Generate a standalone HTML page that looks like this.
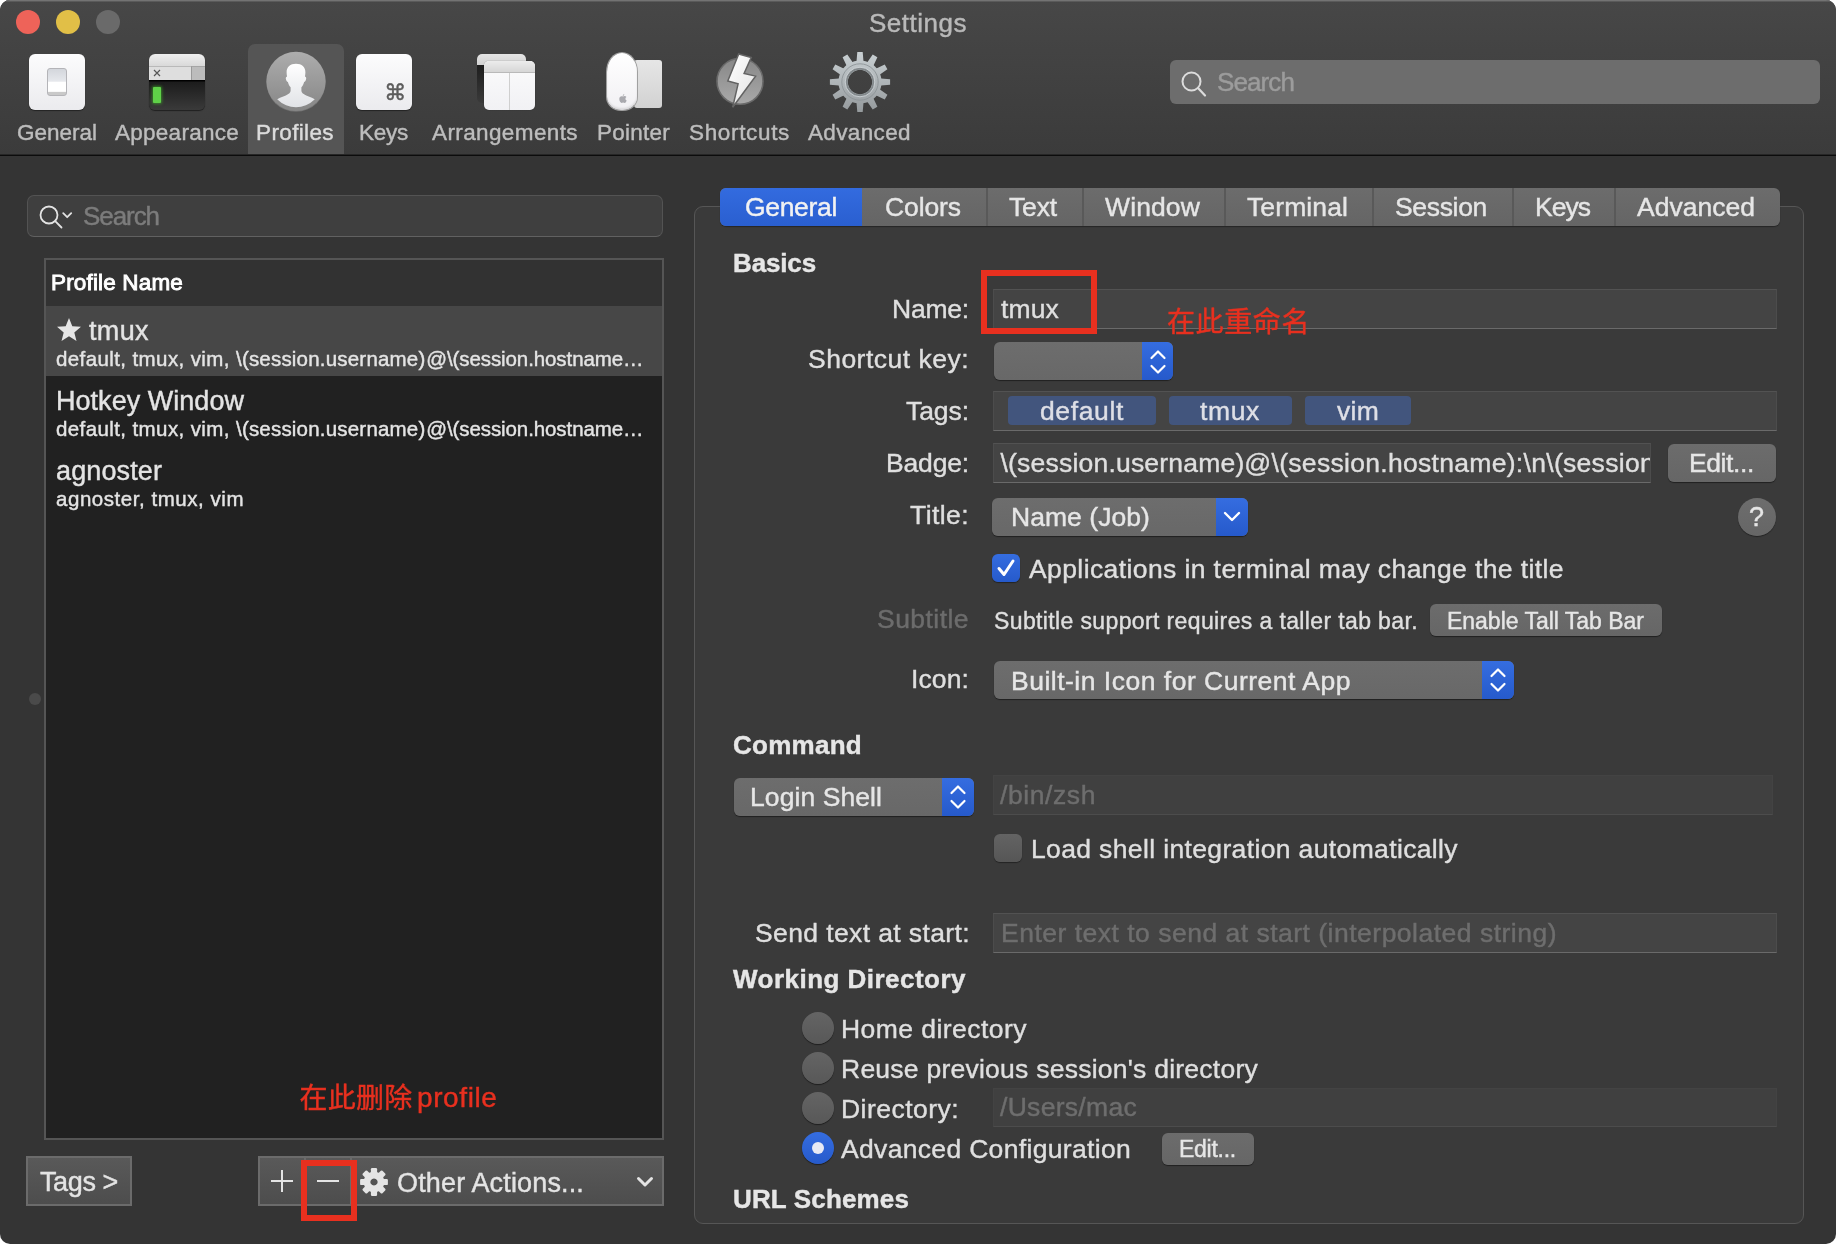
<!DOCTYPE html>
<html lang="en"><head><meta charset="utf-8"><title>Settings</title>
<style>
html,body{margin:0;padding:0;background:#fff}
body{width:1836px;height:1244px;overflow:hidden;position:relative;font-family:"Liberation Sans","Noto Sans CJK SC",sans-serif}
.abs{position:absolute}
#win{position:absolute;left:0;top:0;width:1836px;height:1244px;border-radius:10px;background:#343434;overflow:hidden;will-change:transform}
#tb{position:absolute;left:0;top:0;width:1836px;height:154px;background:linear-gradient(#474747,#3b3b3b);box-shadow:inset 0 1px 0 #737373,inset 0 2px 0 #5a5a5a}
.dot{width:24px;height:24px;border-radius:12px}
.sep{top:0;width:2px;height:38px;background:#595959}
.fld{background:#444;box-sizing:border-box;border:1px solid #4c4c4c;border-top-color:#525252;border-bottom-color:#6a6a6a}
.fld.dis{background:#404040;border-color:#434343;border-bottom-color:#4c4c4c}
.pop{border-radius:6px;background:linear-gradient(#6d6d6d,#686868);box-shadow:0 1px 1px rgba(0,0,0,.45);overflow:hidden}
.pop .cap{position:absolute;right:0;top:0;height:100%;background:linear-gradient(#356de0,#265acb)}
.btn{border-radius:6px;background:linear-gradient(#6c6c6c,#666);box-shadow:0 1px 1px rgba(0,0,0,.45)}
.btn2{background:linear-gradient(#595959,#4d4d4d);border:2px solid #6b6b6b;box-sizing:border-box}
.tag{height:29px;border-radius:4px;background:#42557d}
.rad{width:32px;height:32px;border-radius:16px;background:linear-gradient(#646464,#585858);box-shadow:0 1px 1px rgba(0,0,0,.5)}
.rad.on{background:linear-gradient(#356de0,#265acb)}
.t{position:absolute;white-space:pre;line-height:40px;height:40px;-webkit-text-stroke:0.42px}
.clip{position:absolute;overflow:hidden;height:40px}
</style></head>
<body>
<!-- window chrome -->
<div id="win">
<div id="tb"></div>
<div class="abs" style="left:0;top:154px;width:1836px;height:2px;background:linear-gradient(#262626 0,#262626 50%,#0c0c0c 50%,#0c0c0c 100%)"></div>
<!-- traffic lights -->
<div class="abs dot" style="left:16px;top:10px;background:#ee6359"></div>
<div class="abs dot" style="left:56px;top:10px;background:#e1bf47"></div>
<div class="abs dot" style="left:96px;top:10px;background:#6a6a6a"></div>
<!-- selected toolbar item -->
<div class="abs" style="left:248px;top:44px;width:96px;height:110px;background:#555;border-radius:7px 7px 0 0"></div>

<!-- ICONS -->
<!-- General -->
<div class="abs" style="left:29px;top:54px;width:56px;height:56px;border-radius:6px;background:linear-gradient(#fcfcfd,#ebebee);box-shadow:0 1px 1px rgba(0,0,0,.45)"></div>
<div class="abs" style="left:47px;top:68px;width:20px;height:28px;border-radius:3px;border:1px solid #b4b4b8;background:linear-gradient(#d3d6dc 0%,#e6e8ec 47%,#ffffff 51%,#ffffff 86%,#c9c9c9 90%,#c9c9c9 100%);box-sizing:border-box"></div>
<!-- Appearance -->
<div class="abs" style="left:149px;top:54px;width:56px;height:56px;border-radius:6px;overflow:hidden;background:#2a2a2a;box-shadow:0 1px 1px rgba(0,0,0,.5)">
  <div class="abs" style="left:0;top:0;width:56px;height:12px;background:linear-gradient(#efefef,#d9d9d9)"></div>
  <div class="abs" style="left:0;top:12px;width:42px;height:14px;background:#dedede;border-top:1px solid #b9b9b9;box-sizing:border-box"></div>
  <div class="abs" style="left:42px;top:12px;width:14px;height:14px;background:#bcbcbc;border-top:1px solid #a5a5a5;border-left:1px solid #999;box-sizing:border-box"></div>
  <div class="abs" style="left:0;top:26px;width:56px;height:30px;background:linear-gradient(#000 0,#000 1px,#1c1c1c 2px,#3a3a3a 100%)"></div>
  <div class="abs" style="left:4px;top:33px;width:8px;height:16px;background:#5fd048;border-radius:1px;box-shadow:0 0 3px 1px rgba(70,200,40,.55)"></div>
  <svg class="abs" style="left:4px;top:15px" width="8" height="8" viewBox="0 0 8 8"><path d="M1 1L7 7M7 1L1 7" stroke="#555" stroke-width="1.2" fill="none"/></svg>
</div>
<!-- Profiles -->
<svg class="abs" style="left:264px;top:50px" width="64" height="64" viewBox="264 50 64 64">
  <defs>
    <linearGradient id="pg" x1="0" y1="0" x2="0" y2="1"><stop offset="0" stop-color="#adadad"/><stop offset="1" stop-color="#868686"/></linearGradient>
    <linearGradient id="ph" x1="0" y1="0" x2="0" y2="1"><stop offset="0" stop-color="#ffffff"/><stop offset="1" stop-color="#dfe1e5"/></linearGradient>
    <clipPath id="pc"><circle cx="296" cy="81.400" r="25.800"/></clipPath>
  </defs>
  <circle cx="296" cy="82.200" r="29.600" fill="#737373"/>
  <circle cx="296" cy="81.400" r="29.600" fill="url(#pg)"/>
  <g clip-path="url(#pc)"><path fill="url(#ph)" d="M296 63.800c5.800 0 9.400 3.200 9.400 8.400 0 1.700-.2 3.100-.5 4.500 1.200-.1 1.600 1.300 1.100 2.900-.4 1.400-1.100 2.300-1.900 2.300-.5 2.200-1.500 4.100-2.700 5.400v3.500c0 1.800 1.500 3.200 4.800 4.600 4.800 2 11.200 3.800 12.800 8.600v6h-46v-6c1.600-4.800 8-6.600 12.800-8.600 3.300-1.400 4.800-2.800 4.800-4.600v-3.500c-1.200-1.300-2.200-3.200-2.700-5.400-.8 0-1.500-.9-1.900-2.300-.5-1.600-.1-3 1.100-2.900-.3-1.400-.5-2.800-.5-4.500 0-5.200 3.600-8.400 9.400-8.400z"/></g>
</svg>
<!-- Keys -->
<div class="abs" style="left:356px;top:54px;width:56px;height:56px;border-radius:6px;background:linear-gradient(#fcfcfd,#ebebee);box-shadow:0 1px 1px rgba(0,0,0,.45)"></div>
<!-- Arrangements -->
<div class="abs" style="left:477px;top:54px;width:49px;height:49px;border-radius:5px;background:linear-gradient(#161616,#3a3a3a);overflow:hidden"><div style="height:11px;background:linear-gradient(#e6e6e6,#d2d2d2)"></div></div>
<div class="abs" style="left:484px;top:61px;width:51px;height:49px;border-radius:5px;background:linear-gradient(#fbfbfc,#f1f1f4);overflow:hidden;box-shadow:0 0 1px rgba(0,0,0,.6)"><div style="height:11px;background:linear-gradient(#ececec,#d6d6d6);border-bottom:1px solid #b9b9b9"></div><div class="abs" style="left:25px;top:12px;width:1px;height:38px;background:#cfcfcf"></div></div>
<!-- Pointer -->
<div class="abs" style="left:634px;top:60px;width:28px;height:48px;border-radius:3px;background:linear-gradient(#e6e6e6,#d2d2d2)"></div>
<div class="abs" style="left:607px;top:53px;width:30px;height:57px;border-radius:15px 15px 14px 14px / 19px 19px 13px 13px;background:linear-gradient(#ffffff,#f1f0f3);box-shadow:0 0 0 1px #a0a0a0, inset 0 -2px 2px rgba(0,0,0,.10)"></div>
<svg class="abs" style="left:619px;top:94px" width="8" height="9" viewBox="0 0 8 9"><path d="M5.300 0c.1.800-.6 1.800-1.500 1.900C3.700 1.100 4.500.2 5.300 0zM4 2.400c.5 0 1-.4 1.700-.4.600 0 1.300.3 1.700.9-1.500.9-1.200 3 .3 3.600C7.300 7.600 6.500 9 5.600 9c-.6 0-.8-.4-1.500-.4S3.200 9 2.600 9C1.600 9 .3 7 .3 5.100.3 3.300 1.400 2.300 2.500 2.300c.7 0 1.100.1 1.500.1z" fill="#a9a9ae"/></svg>
<!-- Shortcuts -->
<svg class="abs" style="left:710px;top:50px" width="60" height="62" viewBox="710 50 60 62">
  <defs><linearGradient id="sg" x1="0" y1="0" x2="0" y2="1"><stop offset="0" stop-color="#878787"/><stop offset="1" stop-color="#a9a9a9"/></linearGradient>
  <linearGradient id="bg" x1="0" y1="0" x2="1" y2="1"><stop offset="0" stop-color="#ffffff"/><stop offset="1" stop-color="#e2e2e2"/></linearGradient></defs>
  <circle cx="740" cy="81.300" r="23" fill="url(#sg)" stroke="#6a6a6a" stroke-width="1.600"/>
  <path d="M738.700 54L751.200 57.600L744.100 73.400L755.600 76.100L732.700 107.200L738.100 83.800L727.800 81z" fill="url(#bg)" stroke="#636363" stroke-width="1.500" stroke-linejoin="miter"/>
</svg>
<!-- Advanced gear -->
<svg class="abs" style="left:828px;top:50px" width="64" height="64" viewBox="-32 -32 64 64">
  <defs><linearGradient id="gg" gradientUnits="userSpaceOnUse" x1="0" y1="-30" x2="0" y2="30"><stop offset="0" stop-color="#c9d0d3"/><stop offset="1" stop-color="#959a9d"/></linearGradient></defs>
  <g fill="url(#gg)"><path d="M-2.70 -30.10L2.70 -30.10L3.70 -18.00L-3.70 -18.00zM12.71 -27.42L17.39 -24.72L12.20 -13.74L5.80 -17.44zM24.72 -17.39L27.42 -12.71L17.44 -5.80L13.74 -12.20zM30.10 -2.70L30.10 2.70L18.00 3.70L18.00 -3.70zM27.42 12.71L24.72 17.39L13.74 12.20L17.44 5.80zM17.39 24.72L12.71 27.42L5.80 17.44L12.20 13.74zM2.70 30.10L-2.70 30.10L-3.70 18.00L3.70 18.00zM-12.71 27.42L-17.39 24.72L-12.20 13.74L-5.80 17.44zM-24.72 17.39L-27.42 12.71L-17.44 5.80L-13.74 12.20zM-30.10 2.70L-30.10 -2.70L-18.00 -3.70L-18.00 3.70zM-27.42 -12.71L-24.72 -17.39L-13.74 -12.20L-17.44 -5.80zM-17.39 -24.72L-12.71 -27.42L-5.80 -17.44L-12.20 -13.74z"/>
    <path fill-rule="evenodd" d="M0-21.600a21.600 21.600 0 1 0 .01 0zM0-12.200a12.200 12.200 0 1 1-.01 0z"/>
  </g>
  <circle r="18.200" fill="none" stroke="#8d9497" stroke-width="0.900"/>
  <circle r="13.400" fill="none" stroke="#83898c" stroke-width="2.200"/>
  <circle r="14.800" fill="none" stroke="#cdd3d6" stroke-width="0.900"/>
</svg>

<!-- toolbar search -->
<div class="abs" style="left:1170px;top:60px;width:650px;height:44px;border-radius:6px;background:#6d6d6d"></div>
<svg class="abs" style="left:1180px;top:70px" width="28" height="28" viewBox="0 0 28 28"><circle cx="11.500" cy="11.500" r="9" fill="none" stroke="#dcdcdc" stroke-width="2"/><path d="M18 18l7 7.500" stroke="#dcdcdc" stroke-width="2.200" stroke-linecap="round"/></svg>

<!-- LEFT PANEL -->
<div class="abs" style="left:27px;top:195px;width:636px;height:42px;border-radius:7px;background:#3f3f3f;border:1px solid #535353;border-bottom-color:#616161;box-sizing:border-box"></div>
<svg class="abs" style="left:38px;top:204px" width="38" height="28" viewBox="0 0 38 28"><circle cx="11" cy="11" r="8.500" fill="none" stroke="#e2e2e2" stroke-width="1.800"/><path d="M17.200 17.200l6.300 6.300" stroke="#e2e2e2" stroke-width="1.800" stroke-linecap="round"/><path d="M25.200 9.200l4 4 4-4" stroke="#e2e2e2" stroke-width="1.800" fill="none" stroke-linecap="round" stroke-linejoin="round"/></svg>

<div class="abs" style="left:44px;top:258px;width:620px;height:882px;background:#212121;border:2px solid #555;box-sizing:border-box"></div>
<div class="abs" style="left:46px;top:260px;width:616px;height:46px;background:#323232"></div>
<div class="abs" style="left:46px;top:306px;width:616px;height:70px;background:#474747"></div>
<svg class="abs" style="left:56px;top:317px" width="26" height="25" viewBox="0 0 26 25"><path d="M13 1l3.300 8.200 8.700.6-6.700 5.600 2.200 8.500L13 19.200 5.500 23.900l2.200-8.500L1 9.800l8.700-.6z" fill="#e6e6e6"/></svg>
<div class="abs" style="left:29px;top:693px;width:12px;height:12px;border-radius:6px;background:#4a4a4a"></div>

<!-- bottom buttons -->
<div class="abs btn2" style="left:26px;top:1156px;width:106px;height:50px"></div>
<div class="abs btn2" style="left:258px;top:1156px;width:406px;height:50px"></div>
<div class="abs" style="left:304px;top:1158px;width:2px;height:47px;background:#6b6b6b"></div>
<div class="abs" style="left:350px;top:1158px;width:2px;height:47px;background:#6b6b6b"></div>
<svg class="abs" style="left:268px;top:1167px" width="28" height="28" viewBox="0 0 28 28"><path d="M14 3v22M3 14h22" stroke="#e4e4e4" stroke-width="2"/></svg>
<svg class="abs" style="left:314px;top:1167px" width="28" height="28" viewBox="0 0 28 28"><path d="M3 14h22" stroke="#e4e4e4" stroke-width="2"/></svg>
<svg class="abs" style="left:360px;top:1168px" width="28" height="28" viewBox="-14 -14 28 28">
  <g fill="#e4e4e4">
    <rect x="-3.100" y="-13.900" width="6.200" height="8" rx="1.200"/>
    <rect x="-3.100" y="-13.900" width="6.200" height="8" rx="1.200" transform="rotate(45)"/>
    <rect x="-3.100" y="-13.900" width="6.200" height="8" rx="1.200" transform="rotate(90)"/>
    <rect x="-3.100" y="-13.900" width="6.200" height="8" rx="1.200" transform="rotate(135)"/>
    <rect x="-3.100" y="-13.900" width="6.200" height="8" rx="1.200" transform="rotate(180)"/>
    <rect x="-3.100" y="-13.900" width="6.200" height="8" rx="1.200" transform="rotate(225)"/>
    <rect x="-3.100" y="-13.900" width="6.200" height="8" rx="1.200" transform="rotate(270)"/>
    <rect x="-3.100" y="-13.900" width="6.200" height="8" rx="1.200" transform="rotate(315)"/>
    <path fill-rule="evenodd" d="M0-10.300a10.300 10.300 0 1 0 .01 0zM0-3.600a3.600 3.600 0 1 1-.01 0z"/>
  </g>
</svg>
<svg class="abs" style="left:636px;top:1176px" width="18" height="12" viewBox="0 0 18 12"><path d="M2.500 2.500l6.500 6.500 6.500-6.500" stroke="#e4e4e4" stroke-width="3" fill="none" stroke-linecap="round" stroke-linejoin="round"/></svg>
<div class="abs" style="left:301px;top:1160px;width:56px;height:61px;border:6px solid #e8301f;box-sizing:border-box"></div>

<!-- RIGHT PANEL -->
<div class="abs" style="left:694px;top:206px;width:1110px;height:1018px;border-radius:9px;background:#3a3a3a;border:1px solid #565656;box-sizing:border-box"></div>
<!-- tabs -->
<div class="abs" style="left:720px;top:188px;width:1060px;height:38px;border-radius:6px;background:linear-gradient(#6c6c6c,#656565);box-shadow:0 1px 1px rgba(0,0,0,.35);overflow:hidden">
  <div class="abs" style="left:0;top:0;width:142px;height:38px;background:linear-gradient(#336bdf,#2a5fd0)"></div>
  <div class="abs sep" style="left:266px"></div>
  <div class="abs sep" style="left:362px"></div>
  <div class="abs sep" style="left:504px"></div>
  <div class="abs sep" style="left:652px"></div>
  <div class="abs sep" style="left:792px"></div>
  <div class="abs sep" style="left:894px"></div>
</div>

<!-- fields -->
<div class="abs fld" style="left:993px;top:289px;width:784px;height:40px"></div>
<div class="abs" style="left:981px;top:270px;width:116px;height:64px;border:6px solid #e8301f;box-sizing:border-box"></div>

<div class="abs pop" style="left:994px;top:342px;width:179px;height:38px"><div class="cap" style="width:31px"></div></div>
<svg class="abs" style="left:1149px;top:347px" width="18" height="30" viewBox="0 0 18 30"><path d="M2.500 11l6.500-6.500 6.500 6.500M2.500 19l6.500 6.500 6.500-6.500" stroke="#fff" stroke-width="2.200" fill="none" stroke-linecap="round" stroke-linejoin="round"/></svg>

<div class="abs fld" style="left:993px;top:391px;width:784px;height:40px"></div>
<div class="abs tag" style="left:1008px;top:396px;width:148px"></div>
<div class="abs tag" style="left:1169px;top:396px;width:123px"></div>
<div class="abs tag" style="left:1305px;top:396px;width:106px"></div>

<div class="abs fld" style="left:993px;top:443px;width:658px;height:40px"></div>
<div class="abs btn" style="left:1668px;top:444px;width:108px;height:38px"></div>

<div class="abs pop" style="left:992px;top:498px;width:256px;height:38px"><div class="cap" style="width:32px"></div></div>
<svg class="abs" style="left:1223px;top:510px" width="18" height="14" viewBox="0 0 18 14"><path d="M2 3l7 7 7-7" stroke="#fff" stroke-width="2.400" fill="none" stroke-linecap="round" stroke-linejoin="round"/></svg>
<div class="abs" style="left:1738px;top:498px;width:38px;height:38px;border-radius:19px;background:linear-gradient(#6d6d6d,#666);box-shadow:0 1px 1px rgba(0,0,0,.4)"></div>

<div class="abs" style="left:992px;top:554px;width:28px;height:28px;border-radius:6px;background:linear-gradient(#356de0,#265acb);box-shadow:0 1px 1px rgba(0,0,0,.4)"></div>
<svg class="abs" style="left:992px;top:554px" width="28" height="28" viewBox="0 0 28 28"><path d="M7 14.500l5 6 9-13.500" stroke="#fff" stroke-width="3" fill="none" stroke-linecap="round" stroke-linejoin="round"/></svg>

<div class="abs btn" style="left:1430px;top:604px;width:232px;height:32px"></div>

<div class="abs pop" style="left:994px;top:661px;width:520px;height:38px"><div class="cap" style="width:32px"></div></div>
<svg class="abs" style="left:1489px;top:665px" width="18" height="30" viewBox="0 0 18 30"><path d="M2.500 11l6.500-6.500 6.500 6.500M2.500 19l6.500 6.500 6.500-6.500" stroke="#fff" stroke-width="2.200" fill="none" stroke-linecap="round" stroke-linejoin="round"/></svg>

<div class="abs pop" style="left:734px;top:778px;width:240px;height:38px"><div class="cap" style="width:32px"></div></div>
<svg class="abs" style="left:949px;top:782px" width="18" height="30" viewBox="0 0 18 30"><path d="M2.500 11l6.500-6.500 6.500 6.500M2.500 19l6.500 6.500 6.500-6.500" stroke="#fff" stroke-width="2.200" fill="none" stroke-linecap="round" stroke-linejoin="round"/></svg>
<div class="abs fld dis" style="left:993px;top:775px;width:780px;height:40px"></div>

<div class="abs" style="left:994px;top:834px;width:28px;height:28px;border-radius:6px;background:linear-gradient(#636363,#565656);box-shadow:0 1px 1px rgba(0,0,0,.4)"></div>

<div class="abs fld" style="left:993px;top:913px;width:784px;height:40px"></div>

<div class="abs rad" style="left:802px;top:1012px"></div>
<div class="abs rad" style="left:802px;top:1052px"></div>
<div class="abs rad" style="left:802px;top:1092px"></div>
<div class="abs rad on" style="left:802px;top:1132px"></div>
<div class="abs" style="left:812px;top:1142px;width:12px;height:12px;border-radius:6px;background:#e8eaf4"></div>
<div class="abs fld dis" style="left:993px;top:1088px;width:784px;height:39px"></div>
<div class="abs btn" style="left:1162px;top:1133px;width:92px;height:32px"></div>

<span class="t" style="left:869px;top:3px;font-size:26px;color:#b9b9b9;letter-spacing:0.506px;">Settings</span>
<span class="t" style="left:17px;top:113px;font-size:22.5px;color:#bdbdbd;letter-spacing:-0.007px;">General</span>
<span class="t" style="left:115px;top:113px;font-size:22.5px;color:#bdbdbd;letter-spacing:0.264px;">Appearance</span>
<span class="t" style="left:256px;top:113px;font-size:22.5px;color:#dcdcdc;letter-spacing:0.371px;">Profiles</span>
<span class="t" style="left:359px;top:113px;font-size:22.5px;color:#bdbdbd;letter-spacing:-0.258px;">Keys</span>
<span class="t" style="left:432px;top:113px;font-size:22.5px;color:#bdbdbd;letter-spacing:0.389px;">Arrangements</span>
<span class="t" style="left:597px;top:113px;font-size:22.5px;color:#bdbdbd;letter-spacing:0.243px;">Pointer</span>
<span class="t" style="left:689px;top:113px;font-size:22.5px;color:#bdbdbd;letter-spacing:0.661px;">Shortcuts</span>
<span class="t" style="left:808px;top:113px;font-size:22.5px;color:#bdbdbd;letter-spacing:0.365px;">Advanced</span>
<span class="t" style="left:384.2px;top:73px;font-size:22px;color:#5c5c5c;font-family:'DejaVu Sans',sans-serif;-webkit-text-stroke:0.45px;">⌘</span>
<span class="t" style="left:1217px;top:62px;font-size:26px;color:#9c9c9c;letter-spacing:-0.898px;">Search</span>
<span class="t" style="left:83px;top:196px;font-size:26px;color:#7c7c7c;letter-spacing:-1.065px;">Search</span>
<span class="t" style="left:51px;top:263px;font-size:22.5px;color:#ffffff;-webkit-text-stroke:0.9px;letter-spacing:0.163px;">Profile Name</span>
<span class="t" style="left:89px;top:311px;font-size:27px;color:#e4e4e4;letter-spacing:0.371px;">tmux</span>
<span class="t" style="left:56px;top:339px;font-size:20.5px;color:#e4e4e4;letter-spacing:0.398px;">default, tmux, vim, </span>
<span class="t" style="left:236px;top:339px;font-size:20.5px;color:#e4e4e4;letter-spacing:0.199px;">\(session.username)</span>
<span class="t" style="left:426.2px;top:339px;font-size:20.5px;color:#e4e4e4;letter-spacing:-0.089px;">@\(session.hostname…</span>
<span class="t" style="left:56px;top:381px;font-size:27px;color:#e4e4e4;letter-spacing:0.032px;">Hotkey Window</span>
<span class="t" style="left:56px;top:409px;font-size:20.5px;color:#e4e4e4;letter-spacing:0.398px;">default, tmux, vim, </span>
<span class="t" style="left:236px;top:409px;font-size:20.5px;color:#e4e4e4;letter-spacing:0.199px;">\(session.username)</span>
<span class="t" style="left:426.2px;top:409px;font-size:20.5px;color:#e4e4e4;letter-spacing:-0.089px;">@\(session.hostname…</span>
<span class="t" style="left:56px;top:451px;font-size:27px;color:#e4e4e4;letter-spacing:0.115px;">agnoster</span>
<span class="t" style="left:56px;top:479px;font-size:20.5px;color:#e4e4e4;letter-spacing:0.540px;">agnoster, tmux, vim</span>
<span class="t" style="left:299.5px;top:1079px;font-size:28px;color:#e8301f;letter-spacing:0.246px;">在此删除</span>
<span class="t" style="left:417px;top:1078px;font-size:28px;color:#e8301f;letter-spacing:0.605px;">profile</span>
<span class="t" style="left:40px;top:1162px;font-size:27px;color:#e4e4e4;letter-spacing:-0.385px;">Tags &gt;</span>
<span class="t" style="left:397px;top:1163px;font-size:27px;color:#e4e4e4;letter-spacing:0.150px;">Other Actions...</span>
<span class="t" style="left:745px;top:187px;font-size:26.5px;color:#f2f2f2;letter-spacing:-0.326px;">General</span>
<span class="t" style="left:885px;top:187px;font-size:26.5px;color:#e6e6e6;letter-spacing:-0.096px;">Colors</span>
<span class="t" style="left:1009px;top:187px;font-size:26.5px;color:#e6e6e6;letter-spacing:-0.152px;">Text</span>
<span class="t" style="left:1105px;top:187px;font-size:26.5px;color:#e6e6e6;letter-spacing:0.122px;">Window</span>
<span class="t" style="left:1247px;top:187px;font-size:26.5px;color:#e6e6e6;letter-spacing:0.107px;">Terminal</span>
<span class="t" style="left:1395px;top:187px;font-size:26.5px;color:#e6e6e6;letter-spacing:-0.326px;">Session</span>
<span class="t" style="left:1535px;top:187px;font-size:26.5px;color:#e6e6e6;letter-spacing:-0.980px;">Keys</span>
<span class="t" style="left:1637px;top:187px;font-size:26.5px;color:#e6e6e6;letter-spacing:0.016px;">Advanced</span>
<span class="t" style="left:733px;top:243px;font-size:26px;color:#e6e6e6;font-weight:700;letter-spacing:-0.141px;">Basics</span>
<span class="t" style="left:733px;top:725px;font-size:26px;color:#e6e6e6;font-weight:700;letter-spacing:0.268px;">Command</span>
<span class="t" style="left:733px;top:959px;font-size:26px;color:#e6e6e6;font-weight:700;letter-spacing:0.476px;">Working Directory</span>
<span class="t" style="left:733px;top:1179px;font-size:26px;color:#e6e6e6;font-weight:700;letter-spacing:0.148px;">URL Schemes</span>
<span class="t" style="left:892px;top:289px;font-size:26.5px;color:#dfdfdf;letter-spacing:-0.212px;">Name:</span>
<span class="t" style="left:808px;top:339px;font-size:26.5px;color:#dfdfdf;letter-spacing:0.488px;">Shortcut key:</span>
<span class="t" style="left:906px;top:391px;font-size:26.5px;color:#dfdfdf;letter-spacing:-0.069px;">Tags:</span>
<span class="t" style="left:886px;top:443px;font-size:26.5px;color:#dfdfdf;letter-spacing:-0.167px;">Badge:</span>
<span class="t" style="left:910px;top:495px;font-size:26.5px;color:#dfdfdf;letter-spacing:0.424px;">Title:</span>
<span class="t" style="left:877px;top:599px;font-size:26.5px;color:#6c6c6c;letter-spacing:0.451px;">Subtitle</span>
<span class="t" style="left:911px;top:659px;font-size:26.5px;color:#dfdfdf;letter-spacing:0.109px;">Icon:</span>
<span class="t" style="left:755px;top:913px;font-size:26.5px;color:#dfdfdf;letter-spacing:0.384px;">Send text at start:</span>
<span class="t" style="left:1001px;top:289px;font-size:26.5px;color:#dfdfdf;letter-spacing:0.141px;">tmux</span>
<span class="t" style="left:1167px;top:303px;font-size:28px;color:#e8301f;letter-spacing:0.597px;">在此重命名</span>
<span class="t" style="left:1040px;top:391px;font-size:26.5px;color:#dedfe6;letter-spacing:0.632px;">default</span>
<span class="t" style="left:1200px;top:391px;font-size:26.5px;color:#dedfe6;letter-spacing:0.641px;">tmux</span>
<span class="t" style="left:1337px;top:391px;font-size:26.5px;color:#dedfe6;letter-spacing:0.260px;">vim</span>
<span class="t" style="left:1000.5px;top:443px;font-size:26.5px;color:#dfdfdf;letter-spacing:0.206px;">\(session.username)</span>
<div class="clip" style="left:1244.3px;top:443px;width:405.7px;"><span class="t" style="left:0;top:0;font-size:26.5px;color:#dfdfdf;letter-spacing:0.303px;">@\(session.hostname):\n\(session</span></div>
<span class="t" style="left:1689px;top:443px;font-size:26.5px;color:#e6e6e6;letter-spacing:-0.395px;">Edit...</span>
<span class="t" style="left:1011px;top:497px;font-size:26.5px;color:#e6e6e6;letter-spacing:0.056px;">Name (Job)</span>
<span class="t" style="left:1749px;top:497px;font-size:27px;color:#e6e6e6;letter-spacing:0.969px;">?</span>
<span class="t" style="left:1029px;top:549px;font-size:26.5px;color:#dfdfdf;letter-spacing:0.399px;">Applications in terminal may change the title</span>
<span class="t" style="left:994px;top:601px;font-size:23px;color:#dfdfdf;letter-spacing:0.375px;">Subtitle support requires a taller tab bar.</span>
<span class="t" style="left:1447px;top:601px;font-size:23px;color:#e6e6e6;letter-spacing:-0.018px;">Enable Tall Tab Bar</span>
<span class="t" style="left:1011px;top:661px;font-size:26.5px;color:#e6e6e6;letter-spacing:0.499px;">Built-in Icon for Current App</span>
<span class="t" style="left:750px;top:777px;font-size:26.5px;color:#e6e6e6;letter-spacing:0.078px;">Login Shell</span>
<span class="t" style="left:1000px;top:775px;font-size:26.5px;color:#6e6e6e;letter-spacing:0.584px;">/bin/zsh</span>
<span class="t" style="left:1031px;top:829px;font-size:26.5px;color:#dfdfdf;letter-spacing:0.362px;">Load shell integration automatically</span>
<span class="t" style="left:1001px;top:913px;font-size:26.5px;color:#6e6e6e;letter-spacing:0.495px;">Enter text to send at start (interpolated string)</span>
<span class="t" style="left:841px;top:1009px;font-size:26.5px;color:#dfdfdf;letter-spacing:0.452px;">Home directory</span>
<span class="t" style="left:841px;top:1049px;font-size:26.5px;color:#dfdfdf;letter-spacing:0.246px;">Reuse previous session's directory</span>
<span class="t" style="left:841px;top:1089px;font-size:26.5px;color:#dfdfdf;letter-spacing:0.461px;">Directory:</span>
<span class="t" style="left:1000px;top:1087px;font-size:26.5px;color:#6e6e6e;letter-spacing:0.300px;">/Users/mac</span>
<span class="t" style="left:841px;top:1129px;font-size:26.5px;color:#dfdfdf;letter-spacing:0.325px;">Advanced Configuration</span>
<span class="t" style="left:1179px;top:1129px;font-size:23px;color:#e6e6e6;letter-spacing:-0.259px;">Edit...</span>
</div>
</body></html>
